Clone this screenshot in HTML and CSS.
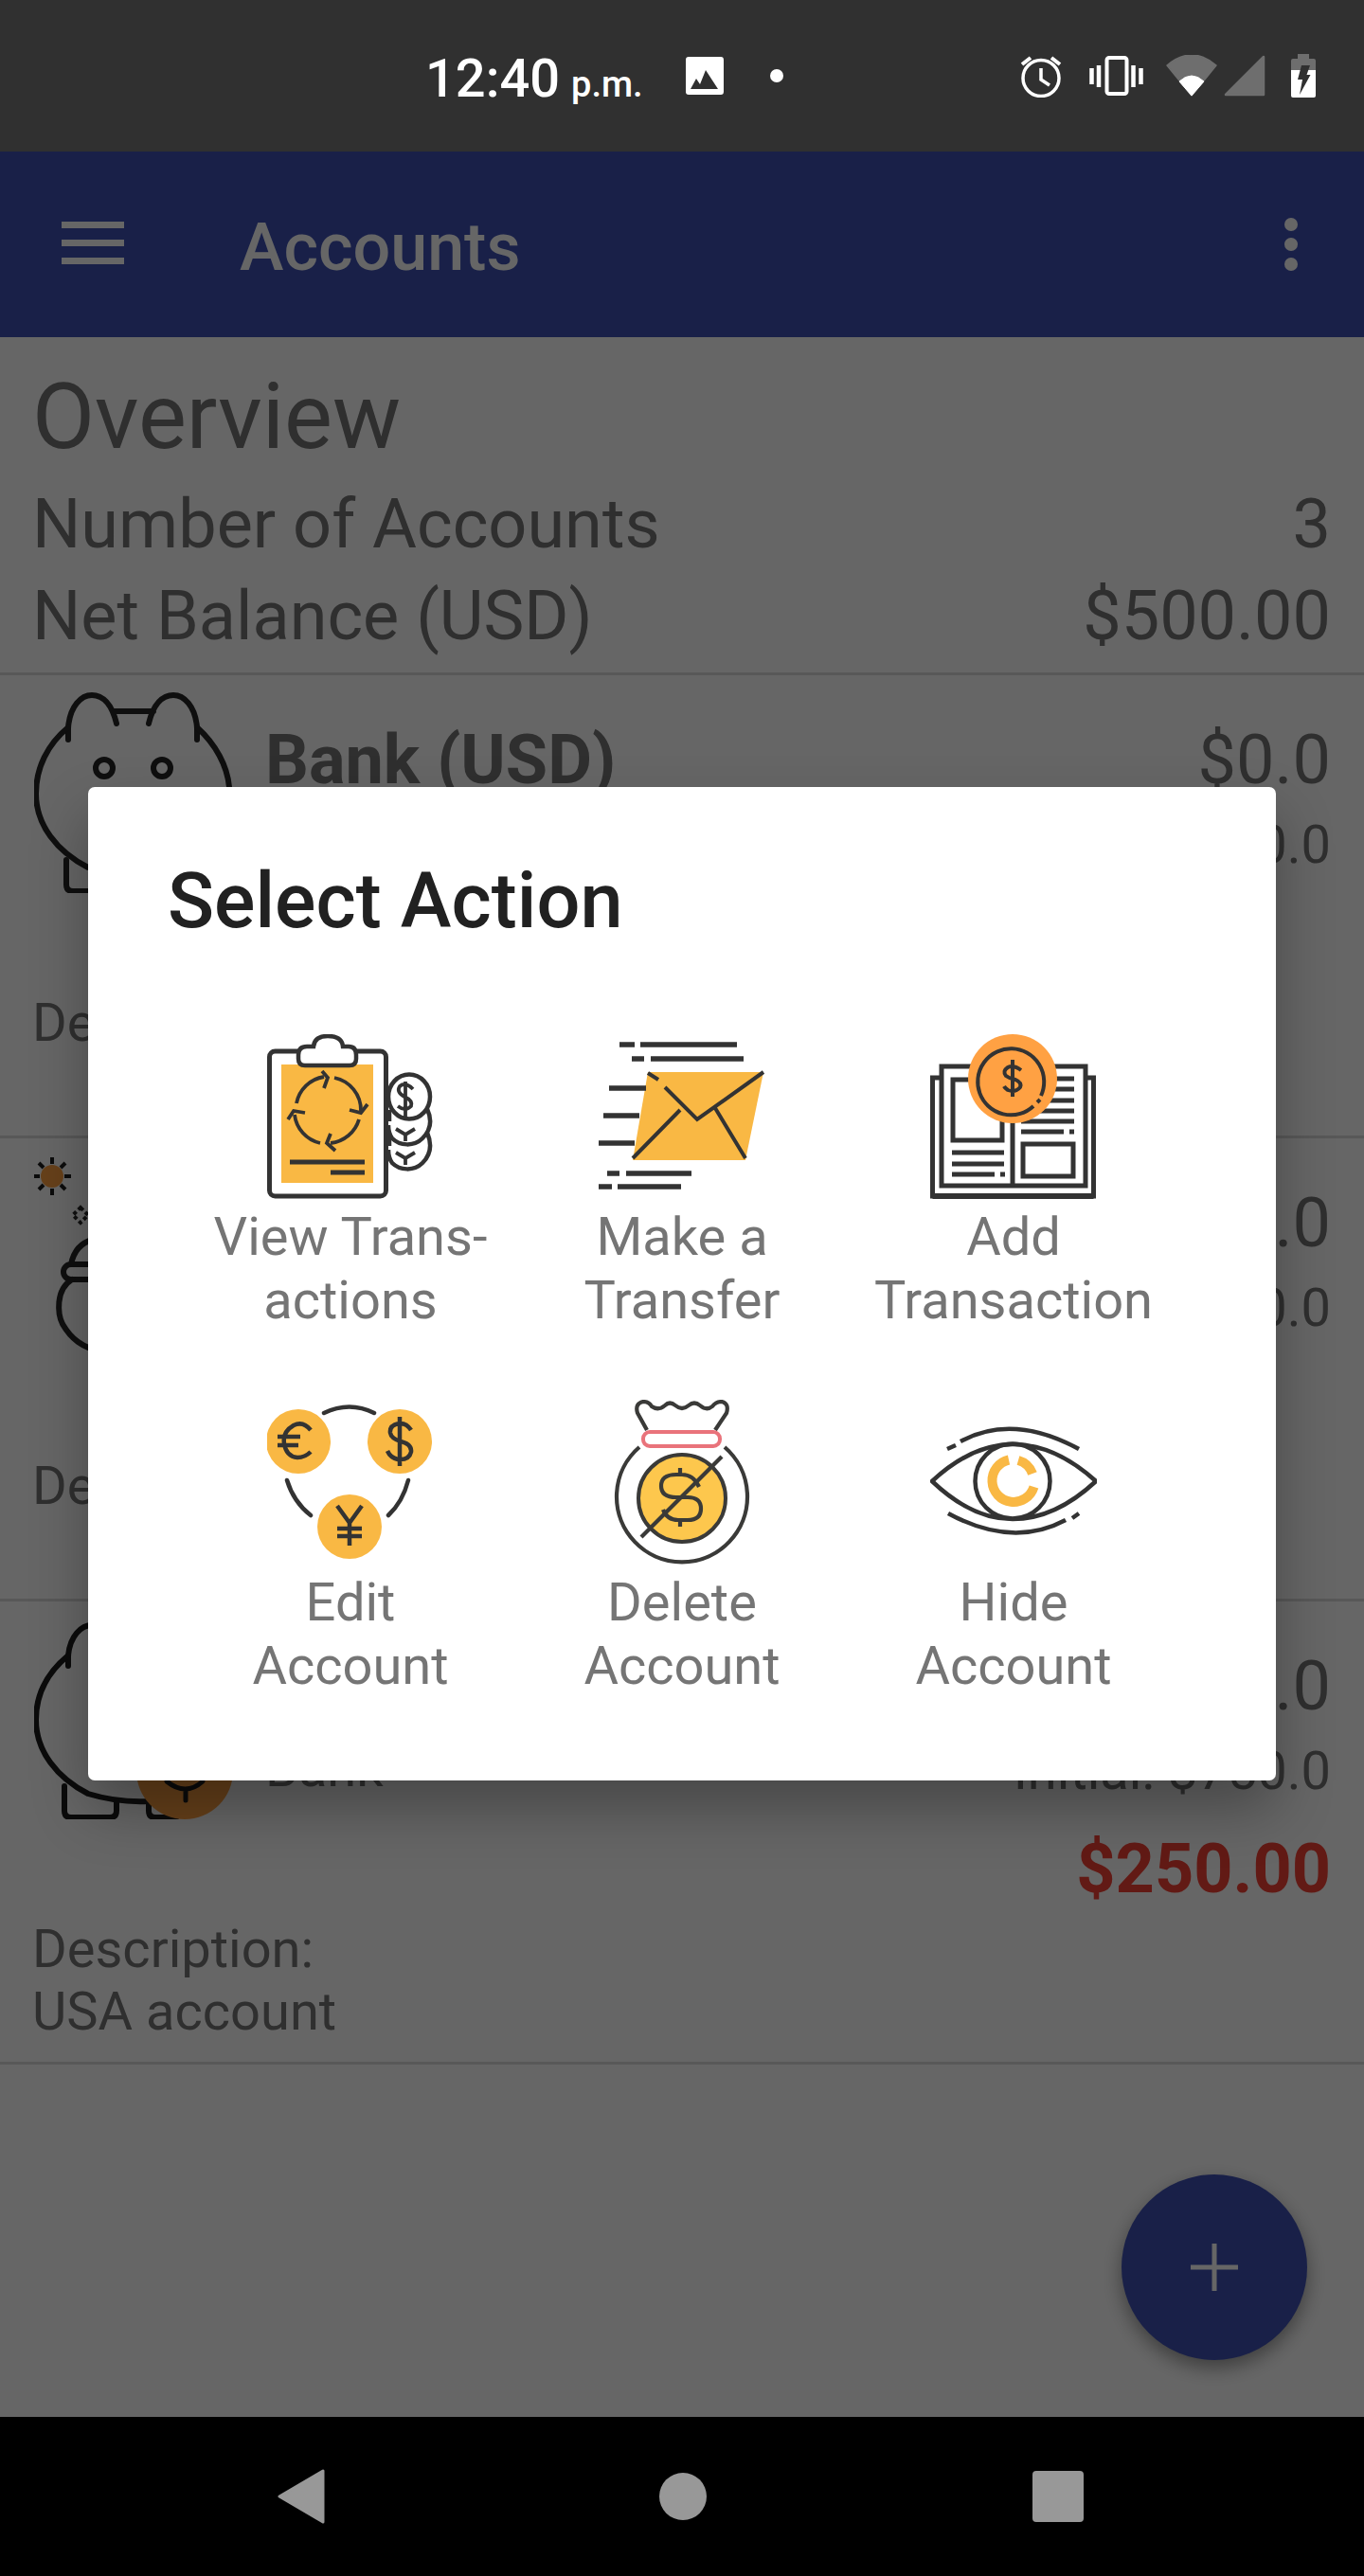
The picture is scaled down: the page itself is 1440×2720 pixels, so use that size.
FILE: index.html
```html
<!DOCTYPE html>
<html lang="en">
<head>
<meta charset="utf-8">
<title>Accounts</title>
<link rel="stylesheet" href="styles.css">
</head>
<body>
<div class="phone">
  <div class="statusbar">
    <div class="status-center">
      <span class="clock">12:40</span><span class="ampm">p.m.</span>
      <svg class="st-img" viewBox="0 0 40 40"><rect width="40" height="40" rx="3" fill="#fff"/><path d="M5 34 L11 23 L15 29 L21 14 L34 34 Z" fill="#303030"/></svg>
      <span class="st-dot"></span>
    </div>
    <div class="status-right">
      <svg class="st-alarm" viewBox="0 0 44 45"><circle cx="22" cy="24.5" r="19" fill="none" stroke="#fff" stroke-width="3.5"/><path d="M22 14V26L31 32" fill="none" stroke="#fff" stroke-width="3.5"/><path d="M2 10L11 3M42 10L33 3" stroke="#fff" stroke-width="4"/></svg>
      <svg class="st-vib" viewBox="0 0 57 42"><rect x="18.5" y="2" width="21" height="38" rx="2.5" fill="none" stroke="#fff" stroke-width="4"/><path d="M10 10V33M2.500 13V30M46.500 10V33M54.500 13V30" stroke="#fff" stroke-width="4.500"/></svg>
      <svg class="st-wifi" viewBox="0 0 54 44"><path d="M1 11Q27 -11 53 11L27 43Z" fill="#6e6e6e" stroke="#6e6e6e" stroke-width="1.500" stroke-linejoin="round"/><path d="M14 28Q27 16 40 28L27 43Z" fill="#fff" stroke="#fff" stroke-width="1" stroke-linejoin="round"/></svg>
      <svg class="st-signal" viewBox="0 0 44 44"><path d="M42 2V42H2Z" fill="#6e6e6e" stroke="#6e6e6e" stroke-width="2.500" stroke-linejoin="round"/></svg>
      <svg class="st-batt" viewBox="0 0 26 46"><path d="M7 0H19V5H24Q26 5 26 7V17H0V7Q0 5 2 5H7Z" fill="#6e6e6e"/><path d="M0 17H26V44Q26 46 24 46H2Q0 46 0 44Z" fill="#fff"/><path d="M11 12H20L16.500 22H20.500L9 43L12 27H7Z" fill="#303030"/></svg>
    </div>
  </div>

  <div class="screen">
    <header class="toolbar">
      <div class="burger"><i></i><i></i><i></i></div>
      <h1 class="toolbar-title">Accounts</h1>
      <div class="kebab"><i></i><i></i><i></i></div>
    </header>

    <main class="content">
      <section class="overview">
        <h2 class="ov-title">Overview</h2>
        <div class="ov-row"><span>Number of Accounts</span><span>3</span></div>
        <div class="ov-row"><span>Net Balance (USD)</span><span>$500.00</span></div>
      </section>

      <article class="account">
        <div class="acc-top">
          <svg class="acc-icon" viewBox="0 0 210 212">
            <g fill="none" stroke="#262626" stroke-width="6" stroke-linecap="round" stroke-linejoin="round">
              <path d="M36 50V37C38 14 50 3 61 3C72 3 82 12 87 33M84 20H126M121 33C126 12 136 3 147 3C158 3 170 14 172 37V50"/>
              <path d="M36 37C14 55 2 80 2 107C2 140 24 168 57 185C80 192 100 194 121 193M172 37C192 55 204 78 206 100"/>
              <path d="M34 177V203Q34 210 41 210H80Q87 210 87 203V193M121 193V203Q121 210 128 210H140"/>
              <circle cx="74" cy="80" r="9"/><circle cx="135" cy="80" r="9"/>
            </g>
          </svg>
          <div class="acc-name"><div class="acc-title">Bank (USD)</div></div>
          <div class="acc-amounts"><div class="acc-now">$0.0</div><div class="acc-init">Initial: $0.0</div></div>
        </div>
        <div class="acc-desc">Description:</div>
      </article>

      <article class="account">
        <div class="acc-top">
          <svg class="acc-icon" viewBox="0 0 210 212">
            <circle cx="19" cy="22" r="12" fill="#ffa143"/>
            <path d="M19 2V9M19 35V42M0 22H6M32 22H39M5 8L10 13M28 31L33 36M5 36L10 31M28 13L33 8" stroke="#1e1e1e" stroke-width="4"/>
            <path d="M49 55L57 63L49 71L41 63Z" fill="none" stroke="#2a2a2a" stroke-width="4" stroke-dasharray="4 3"/>
            <g fill="none" stroke="#262626" stroke-width="6" stroke-linecap="round">
              <path d="M39 115C42 100 50 92 62 89H120"/>
              <rect x="31" y="115" width="120" height="16" rx="8"/>
              <path d="M40 131C22 142 25 168 30 178C38 192 50 204 75 208H120"/>
            </g>
          </svg>
          <div class="acc-amounts"><div class="acc-now">$250.0</div><div class="acc-init">Initial: $0.0</div></div>
        </div>
        <div class="acc-desc">Description:</div>
      </article>

      <article class="account">
        <div class="acc-top">
          <svg class="acc-icon" viewBox="0 0 210 212">
            <g fill="none" stroke="#1c1c1c" stroke-width="6" stroke-linecap="round" stroke-linejoin="round">
              <path d="M36 50V39C38 18 50 7 61 7"/>
              <path d="M36 39C14 57 2 80 2 107C2 140 24 168 57 185C80 192 100 194 121 193"/>
              <path d="M32 177V203Q32 210 39 210H80Q87 210 87 203V193M121 193V203Q121 210 128 210H150"/>
            </g>
            <circle cx="159" cy="161" r="51" fill="#ffa143"/>
            <path d="M140 172Q160 188 178 172M160 182V192" fill="none" stroke="#1c1c1c" stroke-width="5" stroke-linecap="round"/>
          </svg>
          <div class="acc-name"><div class="acc-sub">Bank</div></div>
          <div class="acc-amounts"><div class="acc-now">$250.0</div><div class="acc-init">Initial: $750.0</div></div>
        </div>
        <div class="acc-total">$250.00</div>
        <div class="acc-desc">Description:<br>USA account</div>
      </article>
    </main>

    <button class="fab" type="button" aria-label="Add"><svg viewBox="0 0 50 50"><path d="M25 0V50M0 25H50" stroke="#fff" stroke-width="5"/></svg></button>
    <div class="scrim"></div>

    <div class="dialog">
      <h3 class="dlg-title">Select Action</h3>
      <div class="dlg-grid">
        <div class="action">
          <svg class="ic" viewBox="0 0 176 176">
            <rect x="15" y="32" width="97" height="125" fill="#f9b844"/>
            <rect x="2.500" y="18" width="123" height="153" rx="6" fill="none" stroke="#333" stroke-width="5"/>
            <path d="M40 33Q33 33 33 26V22Q33 13 42 13H49Q50 2 64 2Q79 2 80 13H86Q94 13 94 22V26Q94 33 87 33Z" fill="#fff" stroke="#333" stroke-width="4.500"/>
            <g fill="none" stroke="#333" stroke-width="3.800">
              <path d="M31 73A35 35 0 0 1 60 45M71 46A35 35 0 0 1 99 81M97 90A35 35 0 0 1 67 115M56 115A35 35 0 0 1 29 85"/>
              <path d="M58 39L64 46L60 57M87 80L99 83L106 74M67 105L63 115L72 123M40 83L28 81L22 90"/>
              <path d="M24 135H103M67 146H103" stroke-width="5"/>
              <ellipse cx="150" cy="66" rx="22" ry="23.500" stroke-width="4.500"/>
              <path d="M169 79C175 92 172 102 164 110C155 119 140 118 132 110C129 106 128 102 128 96M129 80V92" stroke-width="4.500"/>
              <path d="M169 104C175 118 172 128 164 136C155 145 140 144 132 136C129 132 128 128 128 122M129 106V118" stroke-width="4.500"/>
              <path d="M154 58Q146 50 140 55Q136 61 145 66Q154 70 152 76Q146 82 138 76M146 50V88"/>
              <path d="M136 100L146 106L156 100M146 106V113M136 125L146 131L156 125M146 131V138"/>
            </g>
          </svg>
          <div class="lbl">View Trans-<br>actions</div>
        </div>
        <div class="action">
          <svg class="ic" viewBox="0 0 176 176">
            <path d="M52 40H174L155 133H36Z" fill="#f9b844"/>
            <g fill="none" stroke="#333" stroke-width="4.500">
              <path d="M22 11H38M44 11H146M35 26H48M55 26H153M11 57H50M5 86H43M0 115H38M9 147H22M29 147H98M0 161H14M20 161H87" stroke-width="5.500"/>
              <path d="M52 41L63 48M70 56L104 90L174 40M86 80L36 131M123 78L155 131" stroke-width="4"/>
            </g>
          </svg>
          <div class="lbl">Make a<br>Transfer</div>
        </div>
        <div class="action">
          <svg class="ic" viewBox="0 0 176 176">
            <g fill="none" stroke="#333" stroke-width="5">
              <path d="M12 46H2.500V171H172.500V46H164M12 160V34H164V160Z"/>
              <path d="M2.500 171H172.500" stroke-width="6"/>
              <path d="M87 60V160M24 48H76V112H24Z"/>
              <path d="M23 125H78M23 137H78M23 148H68M74 148H79M96 47H152M96 58H152M96 70H152M96 81H152M96 92H152M96 103H141M147 103H152"/>
              <rect x="98" y="116" width="53" height="34"/>
            </g>
            <circle cx="87" cy="47" r="47" fill="#ffa143"/>
            <path d="M109 76A35 35 0 1 1 117 65M113 72L116 69" fill="none" stroke="#333" stroke-width="4"/>
            <path d="M96 38Q88 32 82 35Q76 39 80 44Q84 47 90 48Q97 51 95 56Q90 62 82 59Q79 57 78 55M87 27V66" fill="none" stroke="#333" stroke-width="4"/>
          </svg>
          <div class="lbl">Add<br>Transaction</div>
        </div>
        <div class="action">
          <svg class="ic" viewBox="0 0 176 176">
            <g fill="none" stroke="#333" stroke-width="4.500" stroke-linecap="round">
              <path d="M60 14Q87 1 113 14M21 85Q28 108 46 122M149 85Q143 108 128 122"/>
            </g>
            <circle cx="33" cy="44" r="34" fill="#f9b844"/>
            <circle cx="140" cy="44" r="34" fill="#f9b844"/>
            <circle cx="87" cy="134" r="34" fill="#f9b844"/>
            <g fill="none" stroke="#333" stroke-width="4.500">
              <path d="M46 32Q38 22 28 27Q16 34 18 46Q20 60 32 61Q40 61 46 55M11 39H35M11 48H33"/>
              <path d="M152 32Q147 24 139 25Q129 27 130 35Q131 41 141 44Q153 47 152 55Q150 64 138 63Q130 61 127 54M140 18V70"/>
              <path d="M74 112L87 130L100 112M87 130V154M74 136H100M74 144H100"/>
            </g>
          </svg>
          <div class="lbl">Edit<br>Account</div>
        </div>
        <div class="action">
          <svg class="ic" viewBox="0 0 176 176">
            <path d="M51 32L41 14Q38 4 47 2Q53 2 56 7Q63 12 70 6Q75 1 81 6Q88 12 95 6Q101 1 107 6Q114 12 120 7Q124 2 130 2Q138 4 135 14L123 32" fill="none" stroke="#3a3a38" stroke-width="4.200"/>
            <rect x="47" y="34" width="81" height="15" rx="7" fill="#fff" stroke="#e9737b" stroke-width="4"/>
            <path d="M43 50A69 69 0 1 0 133 50" fill="none" stroke="#3a3a38" stroke-width="4.200"/>
            <circle cx="88" cy="104" r="46" fill="#fdc74d" stroke="#3a3a38" stroke-width="4"/>
            <path d="M106 92Q100 79 88 79H82Q66 79 66 91Q66 103 82 103H94Q108 103 108 115Q108 127 94 127H84Q72 127 68 116M86 72V79M86 127V134" fill="none" stroke="#3a3a38" stroke-width="4.200"/>
            <path d="M45 145L130 60" stroke="#3a3a38" stroke-width="4.200"/>
          </svg>
          <div class="lbl">Delete<br>Account</div>
        </div>
        <div class="action">
          <svg class="ic" viewBox="0 0 176 176">
            <g fill="none" stroke="#333" stroke-width="4.500">
              <path d="M2 86Q44 47 87 47Q132 47 175 86Q132 126 87 126Q44 126 2 86Z"/>
              <circle cx="87" cy="86" r="39.500"/>
              <path d="M18 52L27 48M32 44Q87 14 157 52M150 125L157 120M143 127Q87 157 19 120"/>
            </g>
            <path d="M83 63.500A22.500 22.500 0 1 0 109.500 92" fill="none" stroke="#f9b844" stroke-width="10"/>
            <path d="M93 64A22.500 22.500 0 0 1 108 78" fill="none" stroke="#f9b844" stroke-width="10"/>
          </svg>
          <div class="lbl">Hide<br>Account</div>
        </div>
      </div>
    </div>
  </div>

  <nav class="navbar">
    <svg class="nav-back" viewBox="0 0 50 58"><path d="M48 2V56L2 29Z" fill="#989898" stroke="#989898" stroke-width="3" stroke-linejoin="round"/></svg>
    <span class="nav-home"></span>
    <span class="nav-recent"></span>
  </nav>
</div>
</body>
</html>
```

FILE: styles.css
```css
* { box-sizing: border-box; }
html, body { margin: 0; padding: 0; }
body { font-family: Roboto, "Liberation Sans", sans-serif; background: #fff; }
.phone { width: 1440px; height: 2720px; display: flex; flex-direction: column; overflow: hidden; }

.statusbar { height: 160px; background: #303030; display: flex; align-items: center; color: #fff; flex: none; }
.status-center { margin-left: 449px; display: flex; align-items: baseline; margin-top: 6px; }
.clock { font-size: 56px; font-weight: 500; line-height: 66px; }
.ampm { font-size: 38px; font-weight: 500; margin-left: 12px; }
.st-img { width: 40px; height: 40px; margin: -6px 0 0 45px; align-self: center; }
.st-dot { width: 14px; height: 14px; border-radius: 50%; background: #fff; margin: -6px 0 0 49px; align-self: center; }
.status-right { margin-left: auto; margin-right: 51px; display: flex; align-items: center; }
.st-alarm { width: 44px; height: 45px; }
.st-vib { width: 57px; height: 42px; margin-left: 29px; }
.st-wifi { width: 54px; height: 44px; margin-left: 24px; }
.st-signal { width: 44px; height: 44px; margin-left: 7px; }
.st-batt { width: 26px; height: 46px; margin-left: 27px; }

.screen { flex: 1; position: relative; display: flex; flex-direction: column; min-height: 0; background: #fff; }
.toolbar { height: 196px; background: #3f51b5; display: flex; align-items: center; flex: none; color: #fff; }
.burger { width: 66px; margin: -3px 0 0 65px; display: flex; flex-direction: column; gap: 12px; }
.burger i { display: block; height: 7px; background: #fff; }
.toolbar-title { margin: 6px 0 0 122px; font-size: 70px; font-weight: 500; line-height: 80px; }
.kebab { margin-left: auto; margin-right: 70px; display: flex; flex-direction: column; gap: 7px; }
.kebab i { width: 14px; height: 14px; border-radius: 50%; background: #fff; display: block; }

.content { flex: 1; color: #757575; }
.overview { padding: 28px 35px 0 34px; height: 357px; border-bottom: 3px solid #dcdcdc; }
.ov-title { margin: 0 0 9px; font-size: 96px; font-weight: 400; line-height: 112px; }
.ov-row { display: flex; justify-content: space-between; font-size: 72px; line-height: 97px; }

.account { height: 489px; padding: 0 35px 0 36px; border-bottom: 3px solid #dcdcdc; position: relative; }
.acc-top { display: flex; height: 230px; padding-top: 18px; }
.acc-icon { width: 210px; height: 212px; flex: none; }
.acc-name { margin-left: 34px; padding-top: 30px; }
.acc-title { font-size: 72px; font-weight: 700; line-height: 84px; }
.acc-sub { font-size: 56px; line-height: 66px; margin-top: 95px; }
.acc-amounts { margin-left: auto; text-align: right; padding-top: 30px; }
.acc-now { font-size: 72px; line-height: 84px; }
.acc-init { font-size: 56px; line-height: 66px; margin-top: 14px; }
.acc-total { position: absolute; right: 35px; top: 241px; font-size: 72px; font-weight: 700; color: #f44336; line-height: 84px; }
.acc-desc { position: absolute; left: 34px; top: 334px; font-size: 56px; line-height: 66px; }

.fab { position: absolute; right: 60px; bottom: 60px; width: 196px; height: 196px; border: 0; border-radius: 50%; background: #3f51b5; box-shadow: 0 8px 20px rgba(0,0,0,.4); display: flex; align-items: center; justify-content: center; padding: 0; }
.fab svg { width: 50px; height: 50px; }
.scrim { position: absolute; inset: 0; background: rgba(0,0,0,.6); }

.dialog { position: absolute; left: 93px; top: 671px; width: 1254px; height: 1049px; background: #fff; border-radius: 7px; box-shadow: 0 30px 60px rgba(0,0,0,.3); padding: 0 102px; }
.dlg-title { margin: 0 0 0 -18px; padding-top: 73px; font-size: 81px; font-weight: 500; color: #212121; line-height: 96px; }
.dlg-grid { display: grid; grid-template-columns: repeat(3, 350px); margin-top: 92px; }
.action { height: 386px; display: flex; flex-direction: column; align-items: center; }
.ic { width: 176px; height: 176px; flex: none; display: block; }
.lbl { font-size: 56px; line-height: 66.5px; color: #757575; text-align: center; margin-top: 5px; white-space: nowrap; }

.navbar { height: 168px; background: #000; flex: none; display: flex; align-items: center; }
.nav-back { width: 50px; height: 58px; margin-left: 293px; }
.nav-home { width: 50px; height: 50px; border-radius: 50%; background: #989898; margin-left: 353px; }
.nav-recent { width: 54px; height: 54px; border-radius: 4px; background: #989898; margin-left: 344px; }
```
